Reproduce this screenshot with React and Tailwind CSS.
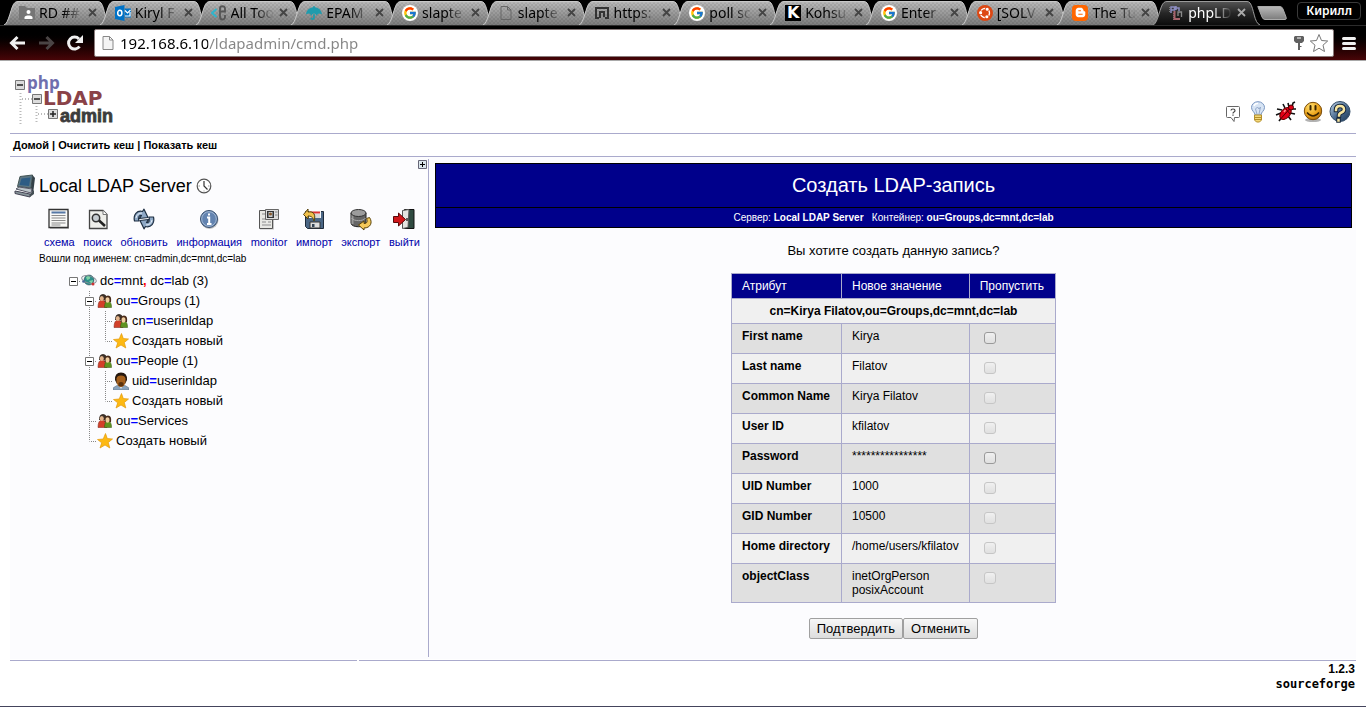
import { useState } from "react";
import { FcGoogle } from "react-icons/fc";
import { FaUmbrella, FaUbuntu, FaBloggerB } from "react-icons/fa6";

/* ---------- browser window ---------- */

const GoogleIcon = () => (
  <span className="flex size-4 items-center justify-center rounded-full bg-white">
    <FcGoogle className="size-[14px]" />
  </span>
);

const FolderIcon = () => (
  <svg viewBox="0 0 16 16" className="size-4">
    <path d="M0 1h6l2 2h8v12H0z" fill="#757575" />
    <circle cx="9.500" cy="7" r="2" fill="#fff" />
    <path d="M5.500 14v-1.500c0-2.600 8-2.600 8 0V14z" fill="#fff" />
  </svg>
);

const OutlookIcon = () => (
  <svg viewBox="0 0 16 16" className="size-4">
    <path d="M0 2l9.500-2v16L0 14z" fill="#0072c6" />
    <ellipse cx="4.800" cy="8" rx="2.100" ry="2.700" fill="none" stroke="#fff" strokeWidth="1.500" />
    <path d="M10 3.500h6v9h-6z" fill="#0072c6" />
    <path d="M10 5.500l2.500 2.500L15.500 5M10 11h5V7" fill="none" stroke="#fff" strokeWidth="1.200" />
  </svg>
);

const EpamIcon = () => (
  <svg viewBox="0 0 16 16" className="size-4" fill="none">
    <path d="M5.500 4L1 8l4.500 4" stroke="#2fb5cc" strokeWidth="2" />
    <path d="M9 6.500h5V3.500c0-3-5-3-5 0v8c0 4 5 4 5 .5V10" stroke="#555" strokeWidth="1.800" />
  </svg>
);

const PageIcon = ({ stroke = "#666", fill = "none" }) => (
  <svg viewBox="0 0 16 16" className="size-4">
    <path d="M3 1.500h6.500L13 5v9.500H3z M9.500 1.500V5H13" fill={fill} stroke={stroke} />
  </svg>
);

const BracketIcon = () => (
  <svg viewBox="0 0 16 16" className="size-4" fill="none" stroke="#333" strokeWidth="2">
    <path d="M5 13H2V3h12v10h-3M10 7H6v6M10 6v6" />
  </svg>
);

const KIcon = () => (
  <span className="flex size-4 items-center justify-center bg-black font-['DejaVu_Sans',sans-serif] text-base leading-none font-bold text-white">
    K
  </span>
);

const UbuntuIcon = () => (
  <span className="flex size-4 items-center justify-center rounded-full bg-[#dd4814]">
    <FaUbuntu className="size-3 text-white" />
  </span>
);

const BloggerIcon = () => (
  <span className="flex size-4 items-center justify-center rounded-sm bg-[#ff6600]">
    <FaBloggerB className="size-[11px] text-white" />
  </span>
);

const PlaIcon = () => (
  <svg viewBox="0 0 16 16" className="size-4" fill="none">
    <path d="M1.500 2v6M5.500 8v7" stroke="#777" strokeDasharray="1 1" />
    <path d="M3 8V2h3.500v3H3M8 5V1M8 3h3v3" stroke="#8c8cc0" strokeWidth="1.500" />
    <path d="M6.500 6v8H12" stroke="#a8636c" strokeWidth="2" />
    <path d="M10 11V7h3.500v5" stroke="#8a8a8a" strokeWidth="1.300" />
  </svg>
);

const tabs = [
  { title: "RD ##", icon: <FolderIcon /> },
  { title: "Kiryl F", icon: <OutlookIcon /> },
  { title: "All Too", icon: <EpamIcon /> },
  { title: "EPAM", icon: <FaUmbrella className="size-4 text-[#1f9bad]" /> },
  { title: "slapte", icon: <GoogleIcon /> },
  { title: "slapte", icon: <PageIcon /> },
  { title: "https:", icon: <BracketIcon /> },
  { title: "poll sc", icon: <GoogleIcon /> },
  { title: "Kohsu", icon: <KIcon /> },
  { title: "Enter", icon: <GoogleIcon /> },
  { title: "[SOLV", icon: <UbuntuIcon /> },
  { title: "The Tu", icon: <BloggerIcon /> },
  { title: "phpLD", icon: <PlaIcon />, active: true },
];

function Tab({ title, icon, active }) {
  return (
    <div className={"relative flex h-[25px] min-w-0 flex-1 items-center pr-[6px] pl-[11px] " + (active ? "z-10 text-white" : "text-black")}>
      <svg viewBox="0 0 108 25" preserveAspectRatio="none" className="absolute top-0 -left-1 h-[25px] w-[108px]">
        <path
          d="M0 25C5 24 7 5 11 2.500Q12 1.500 14 1.500H94Q96 1.500 97 3C101 8 101 23 107 25Z"
          fill={active ? "url(#tabActive)" : "url(#tabIdle)"}
        />
        {!active && <path d="M3 25C6 22 8 5 11 2.500H97C101 8 101 23 105 25Z" fill="url(#tabWeave)" />}
        <path
          d="M0 25C5 24 7 5 11 2.500Q12 1.500 14 1.500H94Q96 1.500 97 3C101 8 101 23 107 25"
          fill="none"
          stroke={active ? "#9a9a9a" : "#c8c8c8"}
        />
      </svg>
      <span className="relative shrink-0">{icon}</span>
      <span className="relative ml-1 min-w-0 flex-1 overflow-hidden text-sm leading-5 whitespace-nowrap [mask-image:linear-gradient(90deg,#000_55%,transparent)]">
        {title}
      </span>
      <button aria-label={"Закрыть " + title} className="relative ml-1 shrink-0">
        <svg viewBox="0 0 11 11" className="size-[11px]" stroke={active ? "#aaa" : "#444"} strokeWidth="1.800">
          <path d="M2 2l7 7M9 2l-7 7" />
        </svg>
      </button>
    </div>
  );
}

function BrowserBar() {
  const [url, setUrl] = useState("192.168.6.10/ldapadmin/cmd.php");
  return (
    <header className="border-b border-[#a9a9a9] bg-linear-to-b from-black from-50% to-[#480508] font-['Noto_Sans','Open_Sans',sans-serif]">
      <svg className="absolute size-0">
        <defs>
          <linearGradient id="tabIdle" x2="0" y2="1">
            <stop stopColor="#b9b9b9" />
            <stop offset="1" stopColor="#7c7c7c" />
          </linearGradient>
          <linearGradient id="tabActive" x2="0" y2="1">
            <stop stopColor="#555" />
            <stop offset=".5" stopColor="#262626" />
            <stop offset="1" stopColor="#0c0c0c" />
          </linearGradient>
          <pattern id="tabWeave" width="4" height="4" patternUnits="userSpaceOnUse">
            <path d="M0 0h2v2H0zM2 2h2v2H2z" fill="#000" fillOpacity=".08" />
          </pattern>
        </defs>
      </svg>
      <div className="flex border-b border-[#2c2c2c] pl-2">
        <div className="flex min-w-0 flex-1">
          {tabs.map((t, i) => (
            <Tab key={i} {...t} />
          ))}
        </div>
        <div className="flex w-[113px] shrink-0 items-start justify-between pr-[5px] pl-1">
          <button aria-label="Новая вкладка" className="mt-[6px]">
            <svg viewBox="0 0 30 14" className="h-[14px] w-[30px]">
              <path d="M1 1Q0 .5 2 .5H23Q25 .5 26 3L29 11Q30 13.500 28 13.500H8Q6 13.500 5 11Z" fill="url(#tabIdle)" stroke="#aaa" />
            </svg>
          </button>
          <button className="mt-[2px] h-[18px] rounded-sm border border-[#3a3a3a] px-2 text-xs leading-4 font-semibold text-white">
            Кирилл
          </button>
        </div>
      </div>
      <div className="flex items-center pt-[3px] pr-[10px] pb-[3px] pl-2">
        <button aria-label="Назад">
          <svg viewBox="0 0 18 16" className="h-4 w-[18px]" fill="none" stroke="#f0f0f0" strokeWidth="3">
            <path d="M17 8H4M9.500 2L3.500 8l6 6" />
          </svg>
        </button>
        <button aria-label="Вперёд" className="ml-3">
          <svg viewBox="0 0 18 16" className="h-4 w-[18px]" fill="none" stroke="#4a4444" strokeWidth="3">
            <path d="M1 8h13M8.500 2l6 6-6 6" />
          </svg>
        </button>
        <button aria-label="Обновить" className="ml-[10px]">
          <svg viewBox="0 0 18 18" className="size-[18px]">
            <path d="M13.500 12.500A6 6 0 1 1 13 5" fill="none" stroke="#f0f0f0" strokeWidth="3" />
            <path d="M17 1v8H9z" fill="#f0f0f0" />
          </svg>
        </button>
        <div className="ml-[10px] flex h-7 flex-1 items-center rounded-xs border border-[#8a7c7c] bg-white pr-1 pl-[5px]">
          <PageIcon stroke="#888" fill="#f4f4f4" />
          <input
            aria-label="Адрес"
            value={url}
            onChange={(e) => setUrl(e.target.value)}
            className="ml-1 min-w-0 flex-1 bg-[linear-gradient(90deg,#000_88px,#858585_88px)] bg-clip-text text-[15px] leading-6 text-transparent outline-none"
          />
          <svg viewBox="0 0 12 16" className="h-4 w-3">
            <path d="M2 1h8l1 1v4L9 8H7v7H5V8H3L1 6V2z" fill="#606060" />
            <path d="M4 3h4" stroke="#fff" />
            <path d="M7 11.500h1.500" stroke="#606060" />
          </svg>
          <button aria-label="Закладка" className="ml-1">
            <svg viewBox="0 0 20 20" className="size-5">
              <path d="M10 1.500l2.500 6 6.200.5-4.700 4.200 1.500 6.300L10 15.200l-5.500 3.300L6 12.200 1.300 8l6.200-.5z" fill="#fff" stroke="#777" />
            </svg>
          </button>
        </div>
        <button aria-label="Меню" className="ml-2 flex w-[14px] flex-col gap-[2px]">
          <span className="h-[3px] rounded-xs bg-[#f0f0f0]" />
          <span className="h-[3px] rounded-xs bg-[#f0f0f0]" />
          <span className="h-[3px] rounded-xs bg-[#f0f0f0]" />
        </button>
      </div>
    </header>
  );
}

/* ---------- page header ---------- */

const Logo = () => (
  <svg viewBox="0 -6 110 60" className="h-[60px] w-[110px]" role="img" aria-label="phpLDAPadmin">
    <g stroke="#bbb" strokeWidth="2" strokeDasharray="1 2">
      <path d="M6.500 17v31M8 23h10M22.500 30v18M24 38h10" />
    </g>
    <g fill="#dcdcdc" stroke="#777">
      <path d="M1.500 4.500h9v9h-9zM18.500 18.500h9v9h-9zM34.500 33.500h9v9h-9z" />
    </g>
    <path d="M3 9h6M20 23h6M36 38h6M39 35v6" stroke="#222" strokeWidth="1.500" />
    <text x="13" y="13" fontFamily="Open Sans, sans-serif" fontWeight="bold" fontSize="17" fill="#6f6fae">php</text>
    <text x="29" y="29" fontFamily="DejaVu Sans, sans-serif" fontWeight="bold" fontSize="20" fill="#8a4248">LDAP</text>
    <text x="46" y="46" fontFamily="Liberation Sans, sans-serif" fontWeight="bold" fontSize="18" fill="#3c3c3c" stroke="#3c3c3c" strokeWidth=".800">admin</text>
  </svg>
);

const HintIcon = () => (
  <svg viewBox="0 0 16 18" className="h-[18px] w-4">
    <path d="M2.500 1.500h11q1 0 1 1v9q0 1-1 1h-4L9 16.500 6 12.500H2.500q-1 0-1-1v-9q0-1 1-1z" fill="#fff" stroke="#666" strokeLinejoin="round" />
    <path d="M6 5.500q0-1.500 2-1.500T10 5.500q0 1-1 1.500T8 8.500M8 9.500v1.200" fill="none" stroke="#444" strokeWidth="1.200" />
  </svg>
);

const BulbIcon = () => (
  <svg viewBox="0 0 16 22" className="h-[22px] w-4">
    <path d="M5 14C5 11 1.500 10 1.500 6.500a6.500 5.800 0 0 1 13 0C14.500 10 11 11 11 14z" fill="#d7e4f4" stroke="#7895c0" />
    <path d="M7 13L5.500 8l2-2L9 8l1.500-2L9 13" fill="none" stroke="#94a9ca" />
    <path d="M4 5Q5 2 8 2.500" stroke="#fff" strokeWidth="1.500" fill="none" />
    <path d="M4.500 14h7v5l-2 2h-3l-2-2z" fill="#f3d879" stroke="#b48f2a" />
    <path d="M5 16.500h6M5 18.500h6" stroke="#b48f2a" />
  </svg>
);

const BugIcon = () => (
  <svg viewBox="0 0 22 22" className="size-[22px]">
    <path d="M10 7L8 3M14 6l-1-4M17 6l1-4 2-1M17 8l4 0M15 12l5 1M13 15l3 4M7 9L2 8M6 12l-5 2M7 16l-3 4" fill="none" stroke="#111" strokeWidth="1.600" />
    <ellipse cx="10.500" cy="12.500" rx="4.500" ry="7" transform="rotate(42 10.500 12.500)" fill="#e00016" stroke="#600" />
    <circle cx="16" cy="6.500" r="2.500" fill="#e00016" stroke="#400" />
    <path d="M14.500 8L6 17.500M11 8l4 5" stroke="#500" />
    <path d="M9 11l1.500-2" stroke="#ff9090" strokeWidth="1.500" />
  </svg>
);

const SmileIcon = () => (
  <svg viewBox="0 0 22 22" className="size-[22px]">
    <defs>
      <radialGradient id="smile" cx=".35" cy=".25" r=".8">
        <stop stopColor="#ffe070" />
        <stop offset=".6" stopColor="#eda51c" />
        <stop offset="1" stopColor="#b06c08" />
      </radialGradient>
    </defs>
    <ellipse cx="11" cy="19" rx="8" ry="2" fill="#000" opacity=".3" />
    <circle cx="11" cy="10" r="8.700" fill="url(#smile)" stroke="#7b4c08" />
    <path d="M8.500 5v3.500M13.500 5v3.500" stroke="#3a2400" strokeWidth="2" strokeLinecap="round" />
    <path d="M5 11.500q6 7 12 0" fill="none" stroke="#3a2400" strokeWidth="1.500" />
  </svg>
);

const HelpIcon = () => (
  <svg viewBox="0 0 22 22" className="size-[22px]">
    <defs>
      <linearGradient id="help" x2="1" y2="1">
        <stop stopColor="#c5d7ea" />
        <stop offset=".5" stopColor="#4f7094" />
        <stop offset="1" stopColor="#1b3553" />
      </linearGradient>
    </defs>
    <circle cx="11" cy="10.500" r="10" fill="url(#help)" stroke="#334d68" />
    <g fill="none" strokeLinecap="square">
      <path d="M7 9q0-4 4-4t4 3.500q0 2-2.500 3T10 14.500M9.500 19v.5" stroke="#16263a" strokeWidth="4.500" />
      <path d="M7 9q0-4 4-4t4 3.500q0 2-2.500 3T10 14.500M9.500 19v.5" stroke="#f8e6a0" strokeWidth="2.500" />
    </g>
  </svg>
);

/* ---------- server toolbar icons ---------- */

const SchemaIcon = () => (
  <svg viewBox="0 0 24 24" className="size-6">
    <path d="M3 4h19v18H3z" fill="#999" opacity=".6" />
    <path d="M2 2.500h19v18H2z" fill="#f8f8f6" stroke="#333" strokeWidth="1.300" />
    <path d="M4.500 5.500h14" stroke="#5577a5" strokeWidth="2" />
    <path d="M4.500 8.500h14M4.500 11h14M4.500 13.500h14M4.500 16h14M4.500 18h9" stroke="#8a8a8a" />
  </svg>
);

const SearchIcon = () => (
  <svg viewBox="0 0 24 24" className="size-6">
    <path d="M3.500 3.500H17l4 4V21.500H3.500z" fill="#eeeeea" stroke="#444" strokeWidth="1.300" />
    <path d="M17 3.500v4h4" fill="#fff" stroke="#777" />
    <circle cx="10" cy="11" r="3.700" fill="#c5cbd0" stroke="#333" strokeWidth="1.500" />
    <path d="M13 13.500l6 5.500" stroke="#222" strokeWidth="2.600" />
  </svg>
);

const RefreshIcon = () => (
  <svg viewBox="0 0 24 24" className="size-6" strokeLinejoin="round">
    <g fill="#8fa9c6" stroke="#1e2f42" strokeWidth="1.200">
      <path d="M2.500 14C1 8 5 3 10.500 4.500l1.500-2.300 4 8.300-8.500 1 2-3C7 8 6 10.500 7 14z" />
      <path d="M21.500 10c1.500 6-2.500 11-8 9.500L12 21.800l-4-8.300 8.500-1-2 3c2.500.5 3.500-2 2.500-5.500z" />
    </g>
    <path d="M4 11q1-5 6-5M20 13q-1 5-6 5" fill="none" stroke="#e6eef6" />
  </svg>
);

const InfoIcon = () => (
  <svg viewBox="0 0 24 24" className="size-6">
    <circle cx="12.500" cy="13" r="9" fill="#888" opacity=".5" />
    <circle cx="12" cy="12" r="8.500" fill="#6283b0" stroke="#38506f" />
    <circle cx="12" cy="12" r="7.300" fill="none" stroke="#a2b8d4" />
    <path d="M12 6.500v2M10 10.500h2.200V17M10 17h4.500" fill="none" stroke="#fff" strokeWidth="2" />
  </svg>
);

const MonitorIcon = () => (
  <svg viewBox="0 0 24 24" className="size-6">
    <path d="M3 4h14v18.500H3z" fill="#888" opacity=".5" />
    <path d="M2.500 3.500h13v18h-13z" fill="#e8e8e4" stroke="#555" />
    <path d="M5 7h4M5 12h4M5 15h4M11 15h3M5 18h9" stroke="#aaa" strokeWidth="1.500" />
    <path d="M8.500 2.500h13v10h-13z" fill="#ddd" stroke="#666" />
    <path d="M10 4h7v7h-7z" fill="#333" />
    <path d="M11.500 5h4v5h-4z" fill="#c8ccd0" />
    <circle cx="13.500" cy="7" r="1.500" fill="#8a5a2c" />
    <path d="M18 5h2.500M18 8h2.500" stroke="#888" />
  </svg>
);

const ImportIcon = () => (
  <svg viewBox="0 0 24 24" className="size-6">
    <path d="M3.500 4.500h18v17h-16l-2-2z" fill="#4a6685" stroke="#1e2b3b" />
    <path d="M7 4h12v7H7z" fill="#f6f6f6" />
    <path d="M8 5.500h10" stroke="#d33" strokeWidth="2" />
    <path d="M10 8h8M10 10h8" stroke="#bbb" />
    <path d="M8 15h10v6H8z" fill="#ddd" stroke="#333" />
    <path d="M10 17h2.500v3H10z" fill="#345" />
    <path d="M1.500 7.500L6 2v3c6-1 8 3 6 9-1-4-3-5-6-5v3z" fill="#f0c04c" stroke="#55400a" />
  </svg>
);

const ExportIcon = () => (
  <svg viewBox="0 0 24 24" className="size-6">
    <path d="M2 6v10c0 5 15 5 15 0V6z" fill="#666" stroke="#222" />
    <path d="M3.500 8v9" stroke="#999" strokeWidth="2" />
    <path d="M2.500 11c2 3.500 12 3.500 14 0" fill="none" stroke="#aaa" />
    <ellipse cx="9.500" cy="6" rx="7.500" ry="3.500" fill="#9c9c9c" stroke="#333" />
    <path d="M20.500 10.500c3.500 5 1 10.500-5.500 10.500v2L9.500 18l5.500-4v2.500c3 0 4-2 2.500-5z" fill="#f5c95a" stroke="#5b4408" />
  </svg>
);

const LogoutIcon = () => (
  <svg viewBox="0 0 24 24" className="size-6">
    <path d="M12.500 2.500h9.500v19h-9.500z" fill="#2f4a40" stroke="#111" />
    <path d="M10.500 3.500L17 2.500l-1 18-5.500 1z" fill="#e4e4e0" stroke="#555" />
    <path d="M15 11v3" stroke="#333" strokeWidth="1.500" />
    <path d="M1.500 9.500h5V6l7 6.500-7 6.500v-3.500h-5z" fill="#d0161a" stroke="#5a0808" />
  </svg>
);

const ServerIcon = () => (
  <svg viewBox="0 0 24 24" className="size-6">
    <path d="M6 2.500L18.500 1 17 14 3.500 12.500z" fill="#5c7684" stroke="#455" />
    <path d="M7.500 4.500L16.500 3.500 15 12 5.500 11z" fill="#2d5c84" />
    <path d="M18.500 1l2.500 3-2 16-2-6z" fill="#334048" />
    <path d="M2 15l3-2 13 2-1 4z" fill="#bcc6ca" stroke="#556" />
    <path d="M1 17l15 3v3L1 19.500z" fill="#87949a" stroke="#445" />
    <path d="M16 20l4-4v4l-4 3z" fill="#444f55" />
  </svg>
);

const ClockIcon = () => (
  <svg viewBox="0 0 16 16" className="size-4" fill="none">
    <circle cx="8" cy="8" r="6.800" fill="#fff" stroke="#555" strokeWidth="1.200" />
    <path d="M8 3v5l3.500 3.500" stroke="#333" strokeWidth="1.200" />
    <path d="M2.500 8h1.500M12 8h1.500M8 12.500v1" stroke="#999" />
  </svg>
);

const tools = [
  ["схема", SchemaIcon],
  ["поиск", SearchIcon],
  ["обновить", RefreshIcon],
  ["информация", InfoIcon],
  ["monitor", MonitorIcon],
  ["импорт", ImportIcon],
  ["экспорт", ExportIcon],
  ["выйти", LogoutIcon],
];

/* ---------- tree ---------- */

const GlobeIcon = () => (
  <svg viewBox="0 0 16 16" className="size-4">
    <circle cx="8" cy="7" r="5" fill="#2c8f8a" stroke="#234" strokeWidth=".500" />
    <path d="M5 4q3-2 4 0t-3 3zM8 8l4-1-1 4z" fill="#7ed3a4" />
    <ellipse cx="8" cy="6.500" rx="7.500" ry="3.500" transform="rotate(15 8 6.500)" fill="none" stroke="#8a9098" />
    <circle cx="12" cy="11" r="1.500" fill="#c33" />
    <circle cx="2.500" cy="8.500" r="1.300" fill="#469" />
  </svg>
);

const GroupIcon = () => (
  <svg viewBox="0 0 16 16" className="size-4">
    <path d="M1 14.500Q1 7 5 7t5 7.500z" fill="#d2402a" stroke="#7a1d10" strokeWidth=".500" />
    <path d="M7.500 14.500Q7.500 8 11 8t3.500 6.500z" fill="#5f9420" stroke="#33520d" strokeWidth=".500" />
    <path d="M2 7Q2 1 6 1t4 6z" fill="#3c3028" />
    <ellipse cx="4.800" cy="5.500" rx="2" ry="2.600" fill="#e3b48c" />
    <path d="M7.500 9q-.5-6.500 3.500-6.500T14 9z" fill="#4a2b1a" />
    <ellipse cx="10.500" cy="7" rx="2" ry="2.800" fill="#f0cd9f" />
  </svg>
);

const UserIcon = () => (
  <svg viewBox="0 0 16 18" className="h-[18px] w-4">
    <path d="M0 18v-2q3-3 8-3t8 3v2z" fill="#8ba4bd" stroke="#55697d" strokeWidth=".500" />
    <path d="M6 13l2 4 2-4z" fill="#e8eef4" />
    <path d="M2 8Q1.500.5 8 .5T14 8l-2 4H4z" fill="#26180f" />
    <path d="M3.500 6.500Q4 3.500 8 3.500t4.500 3V10q-1 5-4.500 5t-4.500-5z" fill="#a5601c" />
    <path d="M5.500 11q2.500-2 5 0v2.500q-2.500 2-5 0z" fill="#5d330d" />
  </svg>
);

const StarIcon = () => (
  <svg viewBox="0 0 16 16" className="size-4">
    <path d="M8.500 .500l1.800 5 5.200.5-4.200 3.500 1.500 5.500L8 12l-5 3 1.700-5.200L.5 6.500l5.700-.5z" fill="#fdb913" stroke="#e39a0c" strokeWidth=".700" />
  </svg>
);

const connectorPaths = {
  v: "M8.500 0V20",
  t: "M8.500 0V20M10 10.500H16",
  l: "M8.500 0V10.500M10 10.500H16",
  minus: "M8.500 16V20M14 10.500H16",
  root: "M14 10.500H16",
};

function Connector({ kind }) {
  const box = kind === "minus" || kind === "root";
  return (
    <svg viewBox="0 0 16 20" className="h-5 w-4 shrink-0">
      {kind === "minus" && <path d="M8.500 0V5" stroke="#888" strokeDasharray="1 1" />}
      <path d={connectorPaths[kind]} stroke="#888" strokeDasharray="1 1" fill="none" />
      {box && (
        <>
          <path d="M4.500 6.500h8v8h-8z" fill="#fff" stroke="#777" />
          <path d="M6 10.500h5" stroke="#000" />
        </>
      )}
    </svg>
  );
}

const Eq = () => <b className="text-[#0000ff]">=</b>;

const treeRows = [
  { lines: ["root"], Icon: GlobeIcon, label: <>dc<Eq />mnt<b className="text-[#ff0000]">,</b> dc<Eq />lab (3)</> },
  { lines: ["", "minus"], Icon: GroupIcon, label: <>ou<Eq />Groups (1)</> },
  { lines: ["", "v", "t"], Icon: GroupIcon, label: <>cn<Eq />userinldap</> },
  { lines: ["", "v", "l"], Icon: StarIcon, label: "Создать новый" },
  { lines: ["", "minus"], Icon: GroupIcon, label: <>ou<Eq />People (1)</> },
  { lines: ["", "v", "t"], Icon: UserIcon, label: <>uid<Eq />userinldap</> },
  { lines: ["", "v", "l"], Icon: StarIcon, label: "Создать новый" },
  { lines: ["", "t"], Icon: GroupIcon, label: <>ou<Eq />Services</> },
  { lines: ["", "l"], Icon: StarIcon, label: "Создать новый" },
];

function Sidebar() {
  return (
    <aside className="my-[2px] w-[419px] shrink-0 border-r border-[#aaaacc] pt-px">
      <div className="flex h-[10px] justify-end pr-px">
        <button aria-label="Развернуть" className="size-[9px]">
          <svg viewBox="0 0 9 9" className="size-[9px]">
            <path d="M.5.5h8v8h-8z" fill="#dbe6ec" stroke="#667" />
            <path d="M2 4.500h5M4.500 2v5" stroke="#000" />
          </svg>
        </button>
      </div>
      <div className="mt-1 flex h-6 items-center pl-1">
        <ServerIcon />
        <h2 className="ml-px text-lg leading-6">Local LDAP Server</h2>
        <span className="ml-1">
          <ClockIcon />
        </span>
      </div>
      <nav className="mt-[9px] flex justify-between pr-2 pl-[34px] text-[11px] leading-[14px]">
        {tools.map(([label, Icon]) => (
          <a key={label} href="#" className="flex flex-col items-center gap-1 text-[#0000aa]">
            <Icon />
            {label}
          </a>
        ))}
      </nav>
      <p className="mt-[3px] pl-[29px] text-[10px] leading-[14px]">Вошли под именем: cn=admin,dc=mnt,dc=lab</p>
      <ul className="mt-[5px] pl-[55px] text-[13px] leading-5">
        {treeRows.map(({ lines, Icon, label }, i) => (
          <li key={i} className="flex h-5 items-center">
            {lines.map((kind, j) => (kind ? <Connector key={j} kind={kind} /> : <span key={j} className="w-4" />))}
            <Icon />
            <a href="#" className="ml-[3px] whitespace-pre">{label}</a>
          </li>
        ))}
      </ul>
    </aside>
  );
}

/* ---------- confirmation form ---------- */

const attributes = [
  { name: "First name", value: ["Kirya"], enabled: true },
  { name: "Last name", value: ["Filatov"] },
  { name: "Common Name", value: ["Kirya Filatov"] },
  { name: "User ID", value: ["kfilatov"] },
  { name: "Password", value: ["****************"], enabled: true },
  { name: "UID Number", value: ["1000"] },
  { name: "GID Number", value: ["10500"] },
  { name: "Home directory", value: ["/home/users/kfilatov"] },
  { name: "objectClass", value: ["inetOrgPerson", "posixAccount"] },
];

const cell = "border border-[#aaaacc] px-[10px] py-[5px] text-left align-top first:pr-[11px] last:pr-[11px]";
const action =
  "h-[21px] rounded-xs border border-[#a0a0a0] bg-linear-to-b from-[#f7f7f7] to-[#dddddd] px-[7px] text-[13px] leading-[19px]";

function Confirmation() {
  return (
    <main className="flex min-w-0 flex-1 flex-col items-center pt-[6px] pr-1 pb-5 pl-[6px]">
      <div className="w-full border border-black bg-[#00008b] text-center text-white">
        <h1 className="border-b border-black text-xl leading-[43px]">Создать LDAP-запись</h1>
        <p className="text-[10px] leading-[19px]">
          Сервер: <b>Local LDAP Server</b> &nbsp; Контейнер: <b>ou=Groups,dc=mnt,dc=lab</b>
        </p>
      </div>
      <p className="mt-[15px] text-[13px] leading-4">Вы хотите создать данную запись?</p>
      <form className="flex flex-col items-center" onSubmit={(e) => e.preventDefault()}>
        <table className="mt-[14px] border-collapse text-xs leading-[14px]">
          <thead className="bg-[#00008b] text-white">
            <tr>
              {["Атрибут", "Новое значение", "Пропустить"].map((h) => (
                <th key={h} className={cell + " font-normal"}>{h}</th>
              ))}
            </tr>
          </thead>
          <tbody>
            <tr className="bg-[#f0f0f0]">
              <th colSpan={3} className="border border-[#aaaacc] py-[5px] text-center">
                cn=Kirya Filatov,ou=Groups,dc=mnt,dc=lab
              </th>
            </tr>
            {attributes.map(({ name, value, enabled }, i) => (
              <tr key={name} className="bg-[#f0f0f0] even:bg-[#e0e0e0]">
                <th className={cell}>
                  <label htmlFor={"skip-" + i}>{name}</label>
                </th>
                <td className={cell}>
                  {value.map((v) => (
                    <div key={v}>{v}</div>
                  ))}
                </td>
                <td className={cell}>
                  <input
                    id={"skip-" + i}
                    type="checkbox"
                    disabled={!enabled}
                    className="my-[3px] ml-1 block size-3 appearance-none rounded-[3px] border border-[#9a9a9a] bg-linear-to-b from-[#f0f0f0] to-[#e0e0e0] checked:bg-[#555] disabled:border-[#c6c6c6] mb-1"
                  />
                </td>
              </tr>
            ))}
          </tbody>
        </table>
        <div className="mt-[15px] flex">
          <button type="submit" className={action}>Подтвердить</button>
          <button type="button" className={action}>Отменить</button>
        </div>
      </form>
    </main>
  );
}

export default function App() {
  return (
    <div className="bg-white font-['Liberation_Sans',Arial,sans-serif] text-black">
      <BrowserBar />
      <div className="px-[10px]">
        <div className="flex h-[72px] items-start justify-between pt-[9px] pr-[5px] pl-1">
          <Logo />
          <div className="mt-[30px] flex items-center gap-[5px]">
            <a href="#" aria-label="Подсказка" className="mt-[5px] mr-1"><HintIcon /></a>
            <a href="#" aria-label="Предложения" className="mr-1"><BulbIcon /></a>
            <a href="#" aria-label="Сообщить об ошибке"><BugIcon /></a>
            <a href="#" aria-label="Пожертвовать"><SmileIcon /></a>
            <a href="#" aria-label="Справка"><HelpIcon /></a>
          </div>
        </div>
        <nav className="border-y border-[#aaaacc] pl-[3px] text-[11px] leading-[22px] font-bold">
          <a href="#">Домой</a> | <a href="#">Очистить кеш</a> | <a href="#">Показать кеш</a>
        </nav>
        <div className="flex bg-[#fcfcfe]">
          <Sidebar />
          <Confirmation />
        </div>
        <footer>
          <div className="flex gap-[2px] pt-px">
            <span className="h-px w-[347px] bg-[#aaaacc]" />
            <span className="h-px flex-1 bg-[#aaaacc]" />
          </div>
          <div className="flex h-[45px] flex-col items-end pr-px">
            <span className="text-xs leading-4 font-bold">1.2.3</span>
            <a href="#" className="font-['DejaVu_Sans_Mono',monospace] text-xs leading-[14px] font-bold">sourceforge</a>
          </div>
        </footer>
      </div>
      <div className="h-px bg-[#44445c]" />
    </div>
  );
}
